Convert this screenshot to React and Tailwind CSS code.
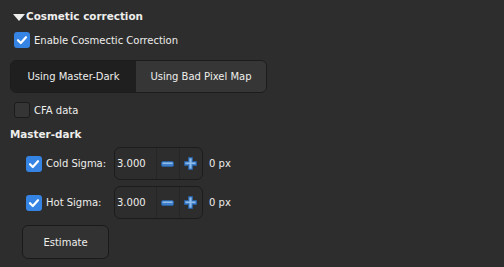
import React from 'react';

const Check = ({ checked }) => (
    <div
        className={
            checked
                ? 'w-4 h-4 rounded-[3px] bg-[#3584e4] flex items-center justify-center shrink-0'
                : 'w-4 h-4 rounded-[3px] bg-[#353535] border border-[#1b1b1b] shrink-0'
        }
    >
        {checked && (
            <svg width="12" height="12" viewBox="0 0 12 12">
                <path d="M2 6.2 L4.8 9 L10 3.2" fill="none" stroke="#fff" strokeWidth="2.2" strokeLinecap="round" strokeLinejoin="round" />
            </svg>
        )}
    </div>
);

const Minus = () => (
    <svg width="13" height="6" viewBox="0 0 13 6">
        <rect x="0.5" y="0.5" width="12" height="5" rx="1.5" fill="#3f7fc9" stroke="#2a5f9e" />
        <rect x="1.5" y="1.5" width="10" height="1.5" fill="#8fbbe8" />
    </svg>
);

const Plus = () => (
    <svg width="13" height="13" viewBox="0 0 13 13">
        <path d="M4.5 0.5 H8.5 V4.5 H12.5 V8.5 H8.5 V12.5 H4.5 V8.5 H0.5 V4.5 H4.5 Z" fill="#3f7fc9" stroke="#2a5f9e" />
        <rect x="5.5" y="1.5" width="2" height="10" fill="#8fbbe8" />
        <rect x="1.5" y="5.5" width="10" height="1.5" fill="#8fbbe8" />
    </svg>
);

const SigmaRow = ({ label, mt }) => (
    <div className={`flex items-center h-[33px] ${mt}`}>
        <div className="ml-[26px]">
            <Check checked />
        </div>
        <span className="ml-[4px] w-[68px]">{label}</span>
        <div className="flex h-[33px] w-[89px] rounded-[6px] border border-[#1c1c1c]">
            <div className="w-[43px] flex items-center pl-[2px] border-r border-[#262626]">3.000</div>
            <div className="w-[23px] flex items-center justify-center border-r border-[#262626]">
                <Minus />
            </div>
            <div className="w-[23px] flex items-center justify-center">
                <Plus />
            </div>
        </div>
        <span className="ml-[6px]">0 px</span>
    </div>
);

const App = () => {
    return (
        <div
            className="w-[504px] h-[267px] bg-[#2d2d2d] text-[#eeeeec] text-[10px] overflow-hidden flex flex-col"
            style={{ fontFamily: '"DejaVu Sans", sans-serif' }}
        >
            <div className="flex items-center h-[12px] mt-[11px] ml-[13px]">
                <svg width="12" height="7" viewBox="0 0 12 7">
                    <path d="M0 0 H12 L6 7 Z" fill="#eeeeec" />
                </svg>
                <span className="ml-[1px] font-bold text-[10.4px]">Cosmetic correction</span>
            </div>

            <div className="flex items-center h-4 mt-[9px] ml-[14px]">
                <Check checked />
                <span className="ml-[4px]">Enable Cosmectic Correction</span>
            </div>

            <div className="flex mt-[12px] ml-[10px] w-[257px] h-[33px] rounded-[6px] border border-[#1c1c1c] overflow-hidden">
                <div className="w-[125px] bg-[#1f1f1f] flex items-center justify-center">Using Master-Dark</div>
                <div className="flex-1 bg-[#363636] flex items-center justify-center">Using Bad Pixel Map</div>
            </div>

            <div className="flex items-center h-4 mt-[9px] ml-[14px]">
                <Check checked={false} />
                <span className="ml-[4px]">CFA data</span>
            </div>

            <div className="h-[12px] mt-[11px] ml-[10px] flex items-center font-bold text-[10.4px]">Master-dark</div>

            <SigmaRow label="Cold Sigma:" mt="mt-[6px]" />
            <SigmaRow label="Hot Sigma:" mt="mt-[6px]" />

            <div className="mt-[6px] ml-[22px] w-[87px] h-[34px] rounded-[6px] border border-[#1a1a1a] bg-[#323232] flex items-center justify-center">
                Estimate
            </div>
        </div>
    );
};

export default App;
